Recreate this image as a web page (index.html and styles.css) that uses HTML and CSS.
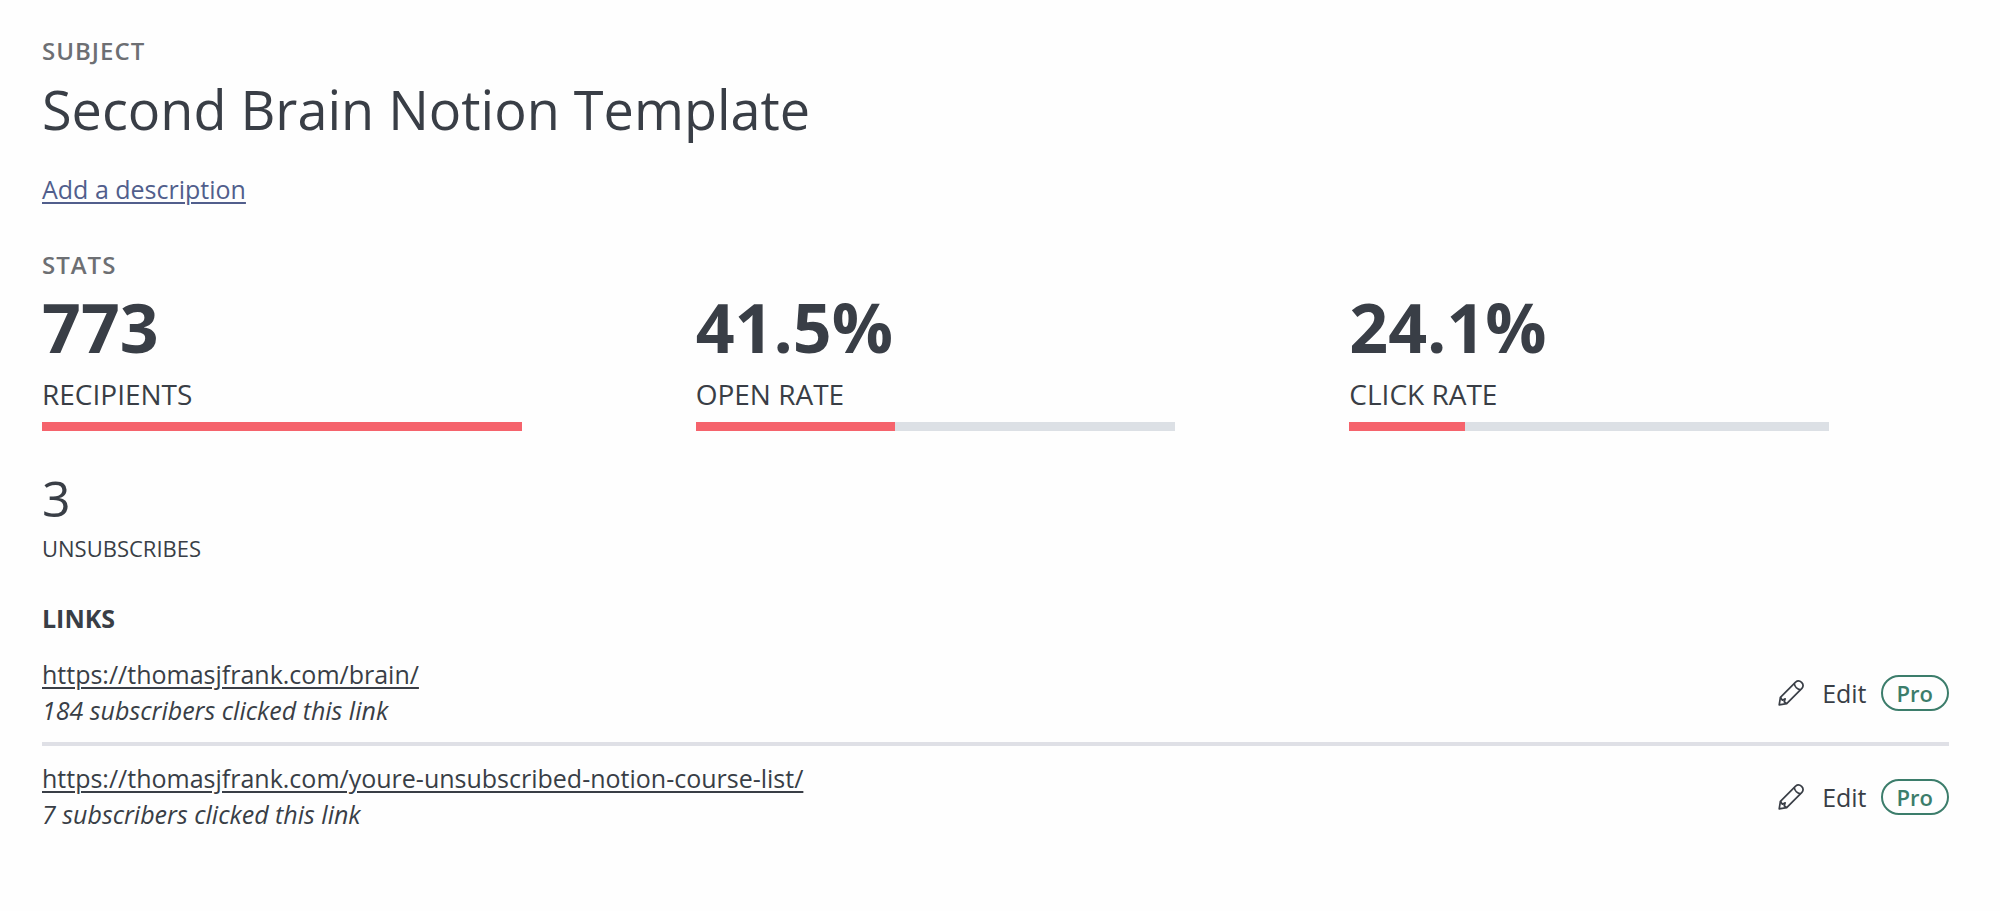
FILE: index.html
```html
<!DOCTYPE html>
<html lang="en">

<head>
    <meta charset="UTF-8" />
    <meta name="viewport" content="width=device-width, initial-scale=1" />
    <title>Second Brain Notion Template</title>
    <link rel="stylesheet" href="styles.css">
</head>

<body>
    <main class="report">
        <header class="subject">
            <p class="section-label">Subject</p>
            <h1>Second Brain Notion Template</h1>
            <a href="#" class="add-description">Add a description</a>
        </header>

        <section class="stats">
            <h2 class="section-label">Stats</h2>
            <div class="stats-grid">
                <div class="stat">
                    <div class="stat-value">773</div>
                    <div class="stat-name">Recipients</div>
                    <div class="bar">
                        <div class="bar-fill" style="width: 100%"></div>
                    </div>
                </div>
                <div class="stat">
                    <div class="stat-value">41.5%</div>
                    <div class="stat-name">Open rate</div>
                    <div class="bar">
                        <div class="bar-fill" style="width: 41.5%"></div>
                    </div>
                </div>
                <div class="stat">
                    <div class="stat-value">24.1%</div>
                    <div class="stat-name">Click rate</div>
                    <div class="bar">
                        <div class="bar-fill" style="width: 24.1%"></div>
                    </div>
                </div>
            </div>
            <div class="unsubscribes">
                <div class="unsub-value">3</div>
                <div class="unsub-name">Unsubscribes</div>
            </div>
        </section>

        <section class="links">
            <h2 class="links-title">Links</h2>
            <ul class="link-list">
                <li class="link-row">
                    <div class="link-info">
                        <a href="https://thomasjfrank.com/brain/">https://thomasjfrank.com/brain/</a>
                        <em>184 subscribers clicked this link</em>
                    </div>
                    <button type="button" class="edit-btn">
                        <svg class="pencil" viewBox="0 0 26 26" aria-hidden="true">
                            <path d="M1.2 24.8 L2.4 17.3 L17.6 2.1 Q20.6 -0.4 23.6 2.4 Q26.4 5.4 23.9 8.4 L8.7 23.6 Z" />
                            <path d="M2.4 17.3 L4.4 20.2 L7.2 18.8 L6.2 21.8 L8.7 23.6 M16.2 3.6 Q17.4 8.6 22.4 9.8" />
                        </svg>
                        <span>Edit</span>
                        <span class="pro">Pro</span>
                    </button>
                </li>
                <li class="link-row">
                    <div class="link-info">
                        <a href="https://thomasjfrank.com/youre-unsubscribed-notion-course-list/">https://thomasjfrank.com/youre-unsubscribed-notion-course-list/</a>
                        <em>7 subscribers clicked this link</em>
                    </div>
                    <button type="button" class="edit-btn">
                        <svg class="pencil" viewBox="0 0 26 26" aria-hidden="true">
                            <path d="M1.2 24.8 L2.4 17.3 L17.6 2.1 Q20.6 -0.4 23.6 2.4 Q26.4 5.4 23.9 8.4 L8.7 23.6 Z" />
                            <path d="M2.4 17.3 L4.4 20.2 L7.2 18.8 L6.2 21.8 L8.7 23.6 M16.2 3.6 Q17.4 8.6 22.4 9.8" />
                        </svg>
                        <span>Edit</span>
                        <span class="pro">Pro</span>
                    </button>
                </li>
            </ul>
        </section>
    </main>
</body>

</html>
```
FILE: styles.css
```css
* {
    box-sizing: border-box;
    margin: 0;
    padding: 0;
}

body {
    font-family: "Open Sans", sans-serif;
    font-size: 25px;
    line-height: 36px;
    color: #393e46;
    background: #fefefe;
}

.report {
    padding: 33px 51px 40px 42px;
}

.section-label {
    font-size: 24px;
    font-weight: 600;
    letter-spacing: 1px;
    text-transform: uppercase;
    color: #6d6f73;
}

h1 {
    font-size: 54px;
    line-height: 74px;
    font-weight: 400;
    margin: 3px 0 25px;
}

a {
    color: inherit;
    text-decoration-thickness: 2px;
    text-underline-offset: 3px;
}

.add-description {
    display: inline-block;
    color: #515e8c;
}

.stats {
    margin-top: 40px;
}

.stats-grid {
    display: grid;
    grid-template-columns: repeat(3, 1fr);
    gap: 54px;
    margin-top: 2px;
}

.stat-value {
    font-size: 68px;
    line-height: 84px;
    font-weight: 700;
}

.stat-name {
    font-size: 28px;
    margin: 7px 0 10px;
    text-transform: uppercase;
}

.bar {
    width: 80%;
    height: 9px;
    background: #dce0e5;
}

.bar-fill {
    height: 100%;
    background: #f5636c;
}

.unsubscribes {
    margin-top: 37px;
}

.unsub-value {
    font-size: 50px;
    line-height: 60px;
}

.unsub-name {
    font-size: 22px;
    line-height: 32px;
    margin-top: 4px;
    text-transform: uppercase;
}

.links {
    margin-top: 36px;
}

.links-title {
    font-size: 25px;
    font-weight: 700;
    text-transform: uppercase;
}

.link-list {
    list-style: none;
    margin-top: 6px;
}

.link-row {
    display: flex;
    justify-content: space-between;
    align-items: center;
    padding: 14px 0;
}

.link-row + .link-row {
    border-top: 4px solid #dfe0e6;
}

.link-info {
    display: flex;
    flex-direction: column;
    align-items: flex-start;
}

.edit-btn {
    display: flex;
    align-items: center;
    gap: 14px;
    padding-top: 2px;
    font: inherit;
    color: inherit;
    background: none;
    border: none;
    cursor: pointer;
}

.pencil {
    width: 26px;
    height: 26px;
    margin-right: 4px;
    fill: none;
    stroke: #393e46;
    stroke-width: 1.7;
    stroke-linejoin: round;
}

.pro {
    padding: 0 14px;
    font-size: 22px;
    line-height: 32px;
    font-weight: 600;
    color: #3c7d6b;
    border: 2px solid #3c7d6b;
    border-radius: 18px;
}
```
